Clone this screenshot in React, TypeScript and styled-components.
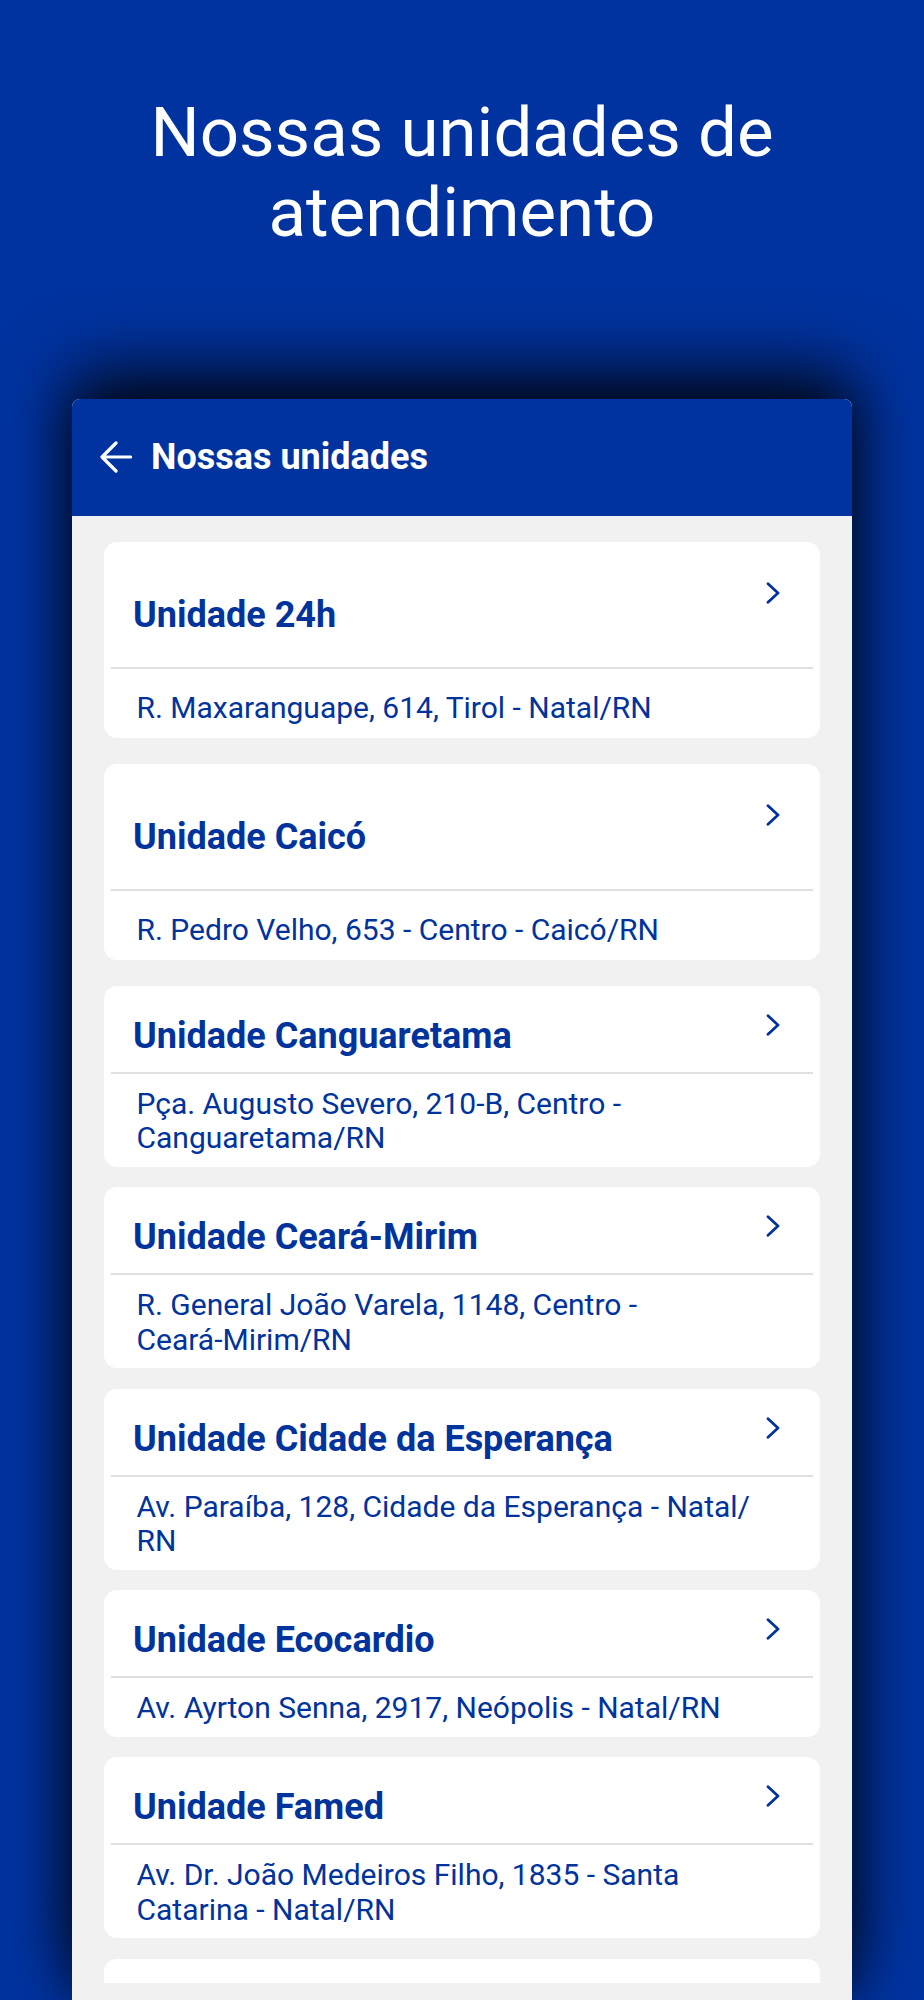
import React from "react";
import styled, { createGlobalStyle } from "styled-components";

const GlobalStyle = createGlobalStyle`
  html, body {
    margin: 0;
    padding: 0;
    background: #0033a0;
  }
  * { box-sizing: border-box; }
`;

const BLUE = "#0033a0";
const TEXT_BLUE = "#00339c";

const Page = styled.div`
  height: 2000px;
  overflow: hidden;
  display: flex;
  flex-direction: column;
  background: ${BLUE};
  font-family: Roboto, "Noto Sans", sans-serif;
`;

const Heading = styled.h1`
  margin: 93px 0 0;
  font-size: 69px;
  line-height: 80px;
  font-weight: 400;
  color: #ffffff;
  text-align: center;
`;

const Panel = styled.section`
  flex: 1;
  min-height: 0;
  margin: 145.5px 72px 0;
  display: flex;
  flex-direction: column;
  background: #f1f1f1;
  border-radius: 8px 8px 0 0;
  padding-bottom: 17px;
  box-shadow: 0 -30px 70px rgba(0, 0, 0, 0.75), 0 0 50px rgba(0, 0, 0, 0.55);
`;

const TopBar = styled.header`
  height: 117px;
  flex-shrink: 0;
  display: flex;
  align-items: center;
  gap: 19px;
  padding-left: 28px;
  background: ${BLUE};
  border-radius: 8px 8px 0 0;
`;

const BarTitle = styled.h2`
  margin: 0;
  font-size: 36px;
  line-height: 44px;
  font-weight: 700;
  color: #ffffff;
`;

const List = styled.div`
  flex: 1;
  min-height: 0;
  overflow: hidden;
  display: flex;
  flex-direction: column;
  gap: 20.5px;
  padding: 26px 32px 0;
`;

const Card = styled.article<{ $spacious?: boolean }>`
  flex-shrink: 0;
  min-height: 60px;
  background: #ffffff;
  border-radius: 13px;
  margin-bottom: ${(p) => (p.$spacious ? "5.5px" : "0")};
`;

const CardHead = styled.div<{ $spacious?: boolean }>`
  display: flex;
  align-items: flex-start;
  justify-content: space-between;
  padding: ${(p) => (p.$spacious ? "40px 40px 30px 29px" : "28px 40px 14px 29px")};
`;

const CardTitle = styled.h3<{ $spacious?: boolean }>`
  margin: ${(p) => (p.$spacious ? "11px" : "0")} 0 0;
  font-size: 36px;
  line-height: 44px;
  font-weight: 700;
  color: ${TEXT_BLUE};
`;

const Divider = styled.hr`
  margin: 0 7px;
  border: 0;
  height: 2px;
  background: #e0e0e0;
`;

const Address = styled.p<{ $spacious?: boolean }>`
  margin: 0;
  font-size: 30px;
  line-height: 34.5px;
  font-weight: 400;
  color: ${TEXT_BLUE};
  padding: ${(p) => (p.$spacious ? "22px 43px 12.5px 32.5px" : "13px 43px 11px 32.5px")};
`;

const NoWrap = styled.span`
  white-space: nowrap;
`;

const BackArrow = () => (
  <svg width="32" height="32" viewBox="0 0 32 32" fill="none">
    <path
      d="M30.5 16H2.5M16 2L2 16l14 14"
      stroke="#ffffff"
      strokeWidth="3.2"
      strokeLinecap="round"
      strokeLinejoin="round"
    />
  </svg>
);

const Chevron = () => (
  <svg width="14" height="22" viewBox="0 0 14 22" fill="none" style={{ flexShrink: 0 }}>
    <path
      d="M2 1.8L12 11L2 20.2"
      stroke={TEXT_BLUE}
      strokeWidth="2.8"
      strokeLinecap="round"
      strokeLinejoin="round"
    />
  </svg>
);

type Unit = { name: string; address: React.ReactNode; spacious?: boolean };

const units: Unit[] = [
  { name: "Unidade 24h", address: "R. Maxaranguape, 614, Tirol - Natal/RN", spacious: true },
  { name: "Unidade Caicó", address: "R. Pedro Velho, 653 - Centro - Caicó/RN", spacious: true },
  {
    name: "Unidade Canguaretama",
    address: (
      <>
        Pça. Augusto Severo, <NoWrap>210-B,</NoWrap> Centro - <NoWrap>Canguaretama/RN</NoWrap>
      </>
    ),
  },
  {
    name: "Unidade Ceará-Mirim",
    address: (
      <>
        R. General João Varela, 1148, Centro - <NoWrap>Ceará-Mirim/RN</NoWrap>
      </>
    ),
  },
  {
    name: "Unidade Cidade da Esperança",
    address: (
      <>
        Av. Paraíba, 128, Cidade da Esperança - Natal/<wbr />RN
      </>
    ),
  },
  { name: "Unidade Ecocardio", address: "Av. Ayrton Senna, 2917, Neópolis - Natal/RN" },
  { name: "Unidade Famed", address: "Av. Dr. João Medeiros Filho, 1835 - Santa Catarina - Natal/RN" },
];

export default function App() {
  return (
    <>
      <GlobalStyle />
      <Page>
        <Heading>
          Nossas unidades de
          <br />
          atendimento
        </Heading>
        <Panel>
          <TopBar>
            <BackArrow />
            <BarTitle>Nossas unidades</BarTitle>
          </TopBar>
          <List>
            {units.map((u) => (
              <Card key={u.name} $spacious={u.spacious}>
                <CardHead $spacious={u.spacious}>
                  <CardTitle $spacious={u.spacious}>{u.name}</CardTitle>
                  <Chevron />
                </CardHead>
                <Divider />
                <Address $spacious={u.spacious}>{u.address}</Address>
              </Card>
            ))}
            <Card aria-hidden="true" />
          </List>
        </Panel>
      </Page>
    </>
  );
}
